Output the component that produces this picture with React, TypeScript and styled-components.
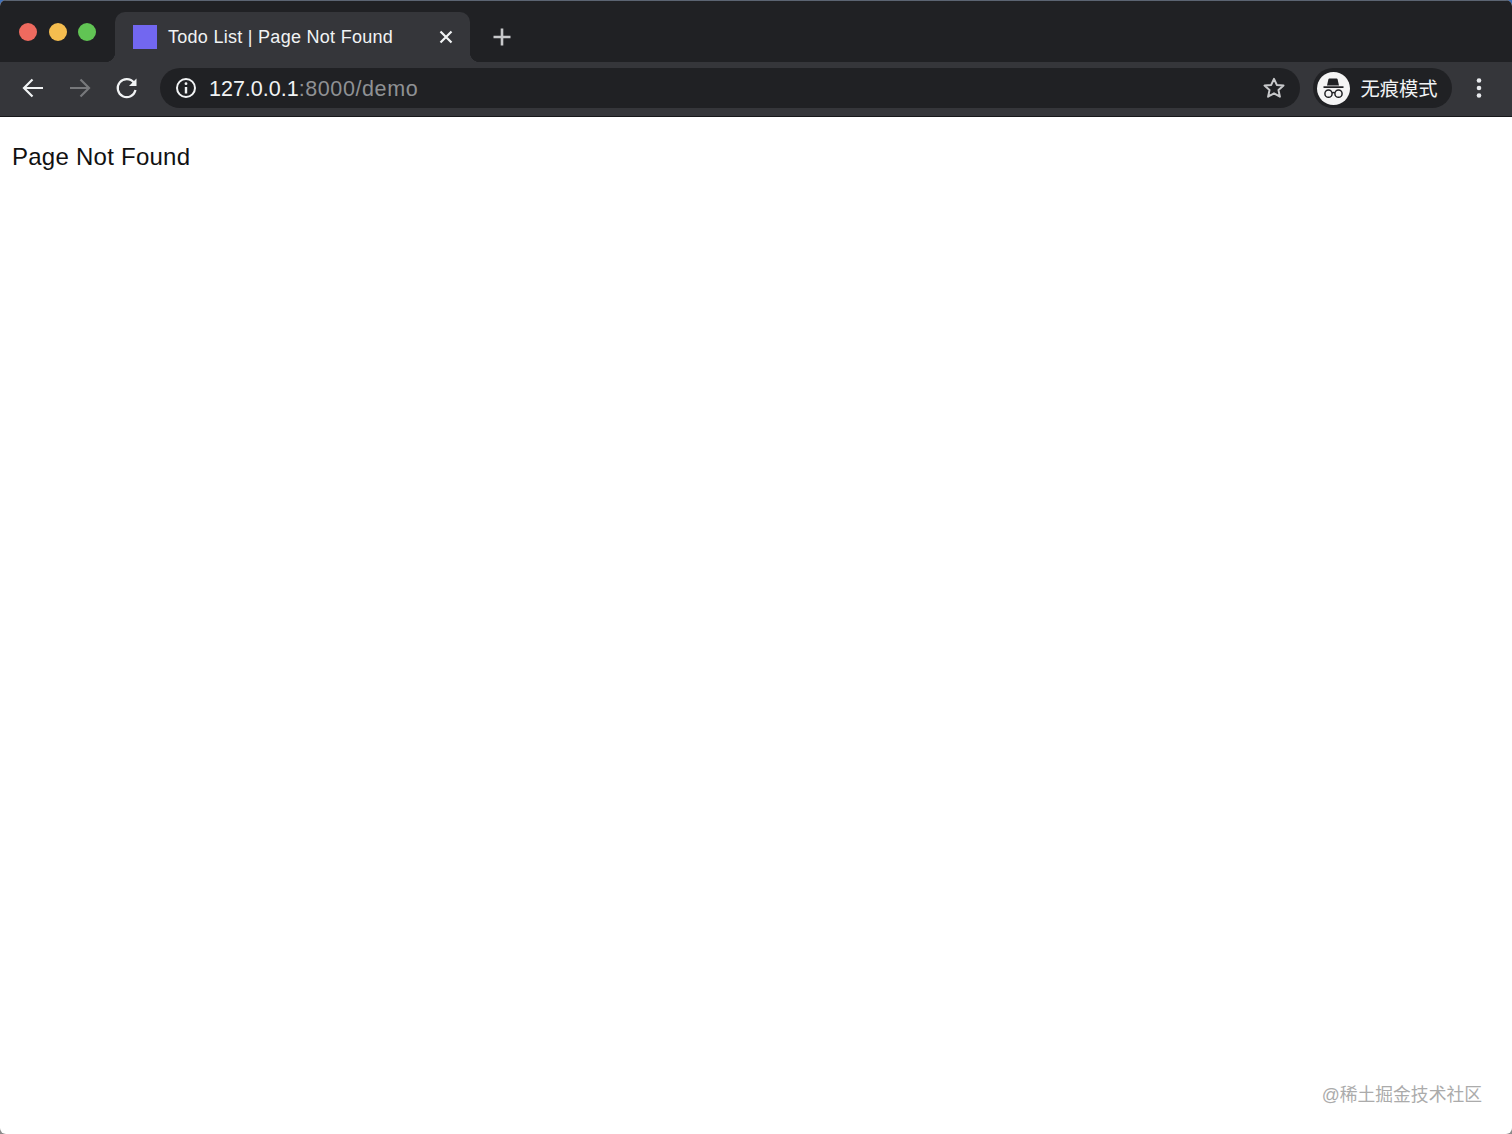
import React from "react";
import styled, { createGlobalStyle } from "styled-components";

const Global = createGlobalStyle`
  html, body { margin: 0; padding: 0; background: #fff; }
  #root { height: 1134px; }
`;
const Desktop = styled.div`
  width: 1512px; height: 1134px; overflow: hidden;
  background: linear-gradient(#3f6fb8 0, #3f6fb8 50%, #8a8a8a 50%, #8a8a8a 100%);
`;
const Window = styled.div`
  position: relative; height: 1134px; width: 1512px; display: flex; flex-direction: column; overflow: hidden;
  border-radius: 6px; background: #fff; font-family: "Liberation Sans", "Noto Sans CJK SC", sans-serif;
`;
const TabStrip = styled.div`
  height: 62px; box-sizing: border-box; flex: none; background: #202124; display: flex; align-items: flex-end;
  padding-left: 19px; border-top: 1px solid #5b6472;
`;
const Lights = styled.div`
  display: flex; gap: 11.5px; width: 96px; height: 49px; flex: none; align-self: flex-start; padding-top: 22px; box-sizing: border-box;
`;
const Light = styled.span<{ $c: string }>`
  width: 18px; height: 18px; border-radius: 50%; background: ${p => p.$c};
`;
const Tab = styled.div`
  position: relative; width: 355px; height: 50px; box-sizing: border-box; background: #35363a; border-radius: 10px 10px 0 0;
  display: flex; align-items: center; padding: 0 17px 0 18px; color: #f1f3f4;
  &::before, &::after { content: ""; position: absolute; bottom: 0; width: 10px; height: 10px; }
  &::before { left: -10px; background: radial-gradient(circle at 0 0, transparent 10px, #35363a 10.5px); }
  &::after { right: -10px; background: radial-gradient(circle at 100% 0, transparent 10px, #35363a 10.5px); }
`;
const Favicon = styled.span`
  width: 24px; height: 24px; background: #7267f0; flex: none; margin-right: 11px;
`;
const TabTitle = styled.span`
  flex: 1; font-family: "Liberation Sans", sans-serif; font-size: 18px; letter-spacing: 0.28px; white-space: nowrap;
`;
const NewTab = styled.svg`
  width: 20px; height: 20px; margin: 0 0 15px 22px;
`;
const Toolbar = styled.div`
  height: 54px; flex: none; box-sizing: border-box; background: #35363a; display: flex; align-items: center; padding: 0 0 2px 20px;
`;
const NavIcon = styled.svg`
  width: 26px; height: 26px; flex: none; display: block;
`;
const NavGroup = styled.div`
  display: flex; gap: 21px; margin-right: 20px;
`;
const Omnibox = styled.div`
  width: 1140px; height: 40px; flex: none; box-sizing: border-box; background: #202124; border-radius: 20px; display: flex; align-items: center;
  padding: 0 14px 0 15px; color: #fff; font-family: "Liberation Sans", sans-serif; font-size: 21.5px;
`;
const Url = styled.span`
  flex: 1; margin-left: 12px; padding-top: 2px; white-space: nowrap; color: #f1f3f4;
`;
const UrlDim = styled.span`
  color: #8f9194; letter-spacing: 0.6px;
`;
const Profile = styled.div`
  margin-left: 13px; width: 139px; height: 40px; box-sizing: border-box; background: #202124; border-radius: 20px; display: flex; align-items: center;
  padding-left: 3.5px; color: #f1f3f4; font-size: 19.3px; font-family: "Noto Sans CJK SC", sans-serif;
`;
const Avatar = styled.svg`
  width: 33px; height: 33px; margin-right: 11px; flex: none;
`;
const Kebab = styled.svg`
  width: 6px; height: 22px; margin-left: 24px; flex: none;
`;
const Divider = styled.div`
  height: 1px; flex: none; background: #17181a;
`;
const Content = styled.main`
  flex: 1; padding: 26px 12px 0; font-family: "Liberation Sans", sans-serif; font-size: 24px; letter-spacing: 0.25px; line-height: 28px; color: #111;
`;
const Watermark = styled.div`
  position: absolute; right: 30px; bottom: 27px; color: #ababab; font-size: 17.8px; line-height: 24px; font-family: "Liberation Sans", "Noto Sans CJK SC", sans-serif;
`;

export default function App() {
  return (
    <Desktop>
      <Global />
      <Window>
        <TabStrip>
          <Lights>
            <Light $c="#ee6a5f" />
            <Light $c="#f5bd4f" />
            <Light $c="#61c454" />
          </Lights>
          <Tab>
            <Favicon />
            <TabTitle>Todo List | Page Not Found</TabTitle>
            <svg width="14" height="14" viewBox="0 0 14 14" fill="none" stroke="#f1f3f4" strokeWidth="2.2">
              <path d="M1.5 1.5l11 11M12.5 1.5l-11 11" />
            </svg>
          </Tab>
          <NewTab viewBox="0 0 20 20" fill="none" stroke="#c8c9cb" strokeWidth="2.6">
            <path d="M10 1.5v17M1.5 10h17" />
          </NewTab>
        </TabStrip>
        <Toolbar>
          <NavGroup>
            <NavIcon viewBox="0 0 26 26" fill="none" stroke="#f1f3f4" strokeWidth="2.2">
              <path d="M23 13H4M12.5 4.5L4 13l8.5 8.5" />
            </NavIcon>
            <NavIcon viewBox="0 0 26 26" fill="none" stroke="#77787b" strokeWidth="2.2">
              <path d="M3 13h19M13.5 4.5L22 13l-8.5 8.5" />
            </NavIcon>
            <NavIcon viewBox="0 0 26 26" fill="none" stroke="#f1f3f4" strokeWidth="2.2">
              <path d="M21.5 15a9 9 0 1 1-1.6-7.3" />
              <path d="M22.5 3.5v7.5H15z" fill="#f1f3f4" stroke="none" />
            </NavIcon>
          </NavGroup>
          <Omnibox>
            <svg width="22" height="22" viewBox="0 0 22 22" fill="none" stroke="#f1f3f4" strokeWidth="2">
              <circle cx="11" cy="11" r="9" />
              <path d="M11 10v6.5" strokeWidth="2.4" />
              <circle cx="11" cy="6.7" r="1.4" fill="#f1f3f4" stroke="none" />
            </svg>
            <Url>127.0.0.1<UrlDim>:8000/demo</UrlDim></Url>
            <svg width="24" height="24" viewBox="0 0 24 24" fill="none" stroke="#c8c9cb" strokeWidth="2" strokeLinejoin="round">
              <path d="M12 2.8l2.8 6.1 6.7.7-5 4.5 1.4 6.6L12 17.3l-5.9 3.4 1.4-6.6-5-4.5 6.7-.7z" />
            </svg>
          </Omnibox>
          <Profile>
            <Avatar viewBox="0 0 33 33">
              <circle cx="16.5" cy="16.5" r="16.5" fill="#f4f4f4" />
              <path d="M10 13.5l1.4-6.2c.1-.5.5-.8 1-.8h7.2c.5 0 .9.3 1 .8l1.4 6.2z" fill="#202124" />
              <path d="M6.5 15.2h20" stroke="#202124" strokeWidth="1.8" />
              <g fill="none" stroke="#202124" strokeWidth="1.5">
                <circle cx="11.5" cy="21.7" r="3.6" />
                <circle cx="21.5" cy="21.7" r="3.6" />
                <path d="M15 21c1-.7 2-.7 3 0" />
              </g>
            </Avatar>
            无痕模式
          </Profile>
          <Kebab viewBox="0 0 6 22" fill="#e8eaed">
            <circle cx="3" cy="3.5" r="2.3" />
            <circle cx="3" cy="11" r="2.3" />
            <circle cx="3" cy="18.5" r="2.3" />
          </Kebab>
        </Toolbar>
        <Divider />
        <Content>Page Not Found</Content>
        <Watermark>@稀土掘金技术社区</Watermark>
      </Window>
    </Desktop>
  );
}
